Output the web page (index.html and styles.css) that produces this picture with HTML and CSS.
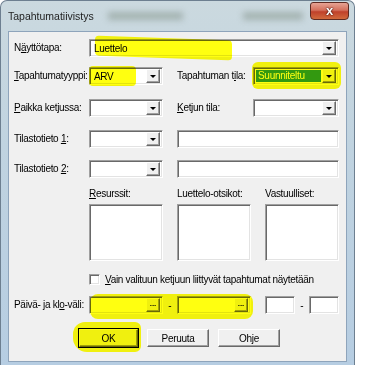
FILE: index.html
```html
<!DOCTYPE html>
<html lang="fi">
<head>
    <meta charset="UTF-8">
    <title>Tapahtumatiivistys</title>
    <link rel="stylesheet" href="styles.css">
</head>
<body>
    <div class="window">
        <div class="titlebar">
            <span class="title">Tapahtumatiivistys</span>
            <span class="glass g1"></span>
            <span class="glass g2"></span>
            <div class="close">x</div>
        </div>

        <div class="client">
            <div class="row r1">
                <label class="lbl">N<u>ä</u>yttötapa:</label>
                <div class="field combo span3">
                    <span class="value">Luettelo</span>
                    <span class="drop"></span>
                </div>
            </div>

            <div class="row r2">
                <label class="lbl clip"><u>T</u>apahtumatyyppi:</label>
                <div class="field combo">
                    <span class="value">ARV</span>
                    <span class="drop"></span>
                </div>
                <div class="pair span2">
                    <label class="lbl">Tapahtuman t<u>i</u>la:</label>
                    <div class="field combo narrow selected">
                        <span class="value">Suunniteltu</span>
                        <span class="drop"></span>
                    </div>
                </div>
            </div>

            <div class="row r3">
                <label class="lbl"><u>P</u>aikka ketjussa:</label>
                <div class="field combo">
                    <span class="value"></span>
                    <span class="drop"></span>
                </div>
                <div class="pair span2">
                    <label class="lbl"><u>K</u>etjun tila:</label>
                    <div class="field combo narrow">
                        <span class="value"></span>
                        <span class="drop"></span>
                    </div>
                </div>
            </div>

            <div class="row r4">
                <label class="lbl">Tilastotieto <u>1</u>:</label>
                <div class="field combo">
                    <span class="value"></span>
                    <span class="drop"></span>
                </div>
                <div class="field span2"></div>
            </div>

            <div class="row r5">
                <label class="lbl">Tilastotieto <u>2</u>:</label>
                <div class="field combo">
                    <span class="value"></span>
                    <span class="drop"></span>
                </div>
                <div class="field span2"></div>
            </div>

            <div class="row lists">
                <div class="list-col">
                    <label class="lbl"><u>R</u>esurssit:</label>
                    <div class="field listbox"></div>
                </div>
                <div class="list-col">
                    <label class="lbl">Luettelo-otsikot:</label>
                    <div class="field listbox"></div>
                </div>
                <div class="list-col">
                    <label class="lbl">Vastuulliset:</label>
                    <div class="field listbox"></div>
                </div>
            </div>

            <div class="row check-row">
                <label class="check span3">
                    <span class="box"></span>
                    <span><u>V</u>ain valituun ketjuun liittyvät tapahtumat näytetään</span>
                </label>
            </div>

            <div class="row dates">
                <label class="lbl">Päivä- ja kl<u>o</u>-väli:</label>
                <div class="pair span-dates">
                    <div class="field date">
                        <span class="value"></span>
                        <span class="dots">...</span>
                    </div>
                    <span class="dash">-</span>
                    <div class="field date">
                        <span class="value"></span>
                        <span class="dots">...</span>
                    </div>
                </div>
                <div class="pair">
                    <div class="field time"></div>
                    <span class="dash">-</span>
                    <div class="field time"></div>
                </div>
            </div>

            <div class="buttons">
                <div class="btn default">OK</div>
                <div class="btn">Peruuta</div>
                <div class="btn">Ohje</div>
            </div>

            <!-- highlighter marks -->
            <span class="mark m-luettelo"></span>
            <span class="mark m-arv"></span>
            <span class="mark m-tila"></span>
            <span class="mark m-date"></span>
            <span class="mark m-ok"></span>
        </div>
    </div>
</body>
</html>
```

FILE: styles.css
```css
body {
    margin: 0;
    background: #fff;
    font-family: "Liberation Sans", Arial, sans-serif;
    font-size: 10px;
    color: #000;
}
.window {
    width: 355px;
    height: 365px;
    box-sizing: border-box;
    padding: 0 7px 3px 7px;
    background: linear-gradient(to bottom, #cbd9df 0%, #c0d3e0 40%, #b6cde2 100%);
    border: 1px solid #6d7f90;
    border-bottom: none;
    border-radius: 7px 7px 0 0;
    display: flex;
    flex-direction: column;
    overflow: hidden;
}
.titlebar {
    height: 30px;
    flex-shrink: 0;
    position: relative;
    display: flex;
    align-items: center;
}
.title {
    font-size: 10.5px;
    color: #1e1e1e;
    position: relative;
    z-index: 1;
}
.glass {
    position: absolute;
    top: 11px;
    height: 8px;
    background: #7f8f84;
    filter: blur(3px);
    opacity: 0.5;
}
.g1 { left: 100px; width: 75px; }
.g2 { left: 235px; width: 60px; }
.close {
    position: absolute;
    right: -2px;
    top: 1px;
    width: 39px;
    height: 18px;
    box-sizing: border-box;
    border: 1px solid #5e2a22;
    border-radius: 3px 3px 4px 4px;
    background: linear-gradient(to bottom, #e6a394 0%, #d4705c 45%, #c0412b 55%, #d26a3c 100%);
    color: #fff;
    font-weight: bold;
    font-size: 13px;
    line-height: 15px;
    text-align: center;
    text-shadow: 0 0 2px #3b0d05, 0 0 1px #3b0d05;
}
.client {
    flex: 1;
    position: relative;
    background: #f0f0f0;
    border: 1px solid #8ea4bb;
    padding: 7px 5px 0 5px;
}
.row {
    display: grid;
    grid-template-columns: 61px 74px 74px 74px;
    column-gap: 14px;
    height: 18px;
}
.r2 { margin-top: 10px; }
.r3 { margin-top: 14px; }
.r4 { margin-top: 13px; }
.r5 { margin-top: 12px; }
.lbl {
    display: block;
    line-height: 18px;
    white-space: nowrap;
    letter-spacing: -0.3px;
}
.clip {
    width: 74px;
    overflow: hidden;
}
.span3 { grid-column: 2 / 5; }
.span2 { grid-column: 3 / 5; }
.span-dates { grid-column: 2 / 4; }
.pair {
    display: flex;
    align-items: center;
    justify-content: space-between;
}
.field {
    background: #fff;
    box-sizing: border-box;
    border: 1px solid;
    border-color: #a0a0a0 #fff #fff #a0a0a0;
    box-shadow: inset 1px 1px #696969, inset -1px -1px #e3e3e3;
    height: 18px;
}
.combo, .date {
    display: flex;
    align-items: center;
    padding: 2px;
}
.value {
    flex: 1;
    padding-left: 2px;
    letter-spacing: -0.3px;
}
.narrow { width: 86px; }
.drop, .dots {
    width: 14px;
    height: 14px;
    box-sizing: border-box;
    background: #f0f0f0;
    border: 1px solid;
    border-color: #fff #696969 #696969 #fff;
    box-shadow: inset -1px -1px #a0a0a0;
    display: flex;
    align-items: center;
    justify-content: center;
}
.drop::after {
    content: "";
    border-left: 3px solid transparent;
    border-right: 3px solid transparent;
    border-top: 3px solid #000;
}
.dots {
    font-weight: bold;
    font-size: 8px;
    line-height: 8px;
    padding-bottom: 3px;
}
.selected .value {
    background: #3399ff;
    color: #fff;
    margin-right: 1px;
    height: 12px;
    line-height: 12px;
}
.lists {
    height: auto;
    margin-top: 10px;
}
.list-col {
    width: 74px;
    display: flex;
    flex-direction: column;
    gap: 4px;
}
.list-col:first-child { grid-column: 2; }
.list-col .lbl { line-height: 12px; }
.listbox { height: 57px; }
.check-row {
    height: 14px;
    margin-top: 11px;
}
.check {
    display: flex;
    align-items: center;
    gap: 5px;
    letter-spacing: -0.3px;
}
.box {
    width: 11px;
    height: 11px;
    box-sizing: border-box;
    background: #fff;
    border: 1px solid;
    border-color: #a0a0a0 #fff #fff #a0a0a0;
    box-shadow: inset 1px 1px #696969, inset -1px -1px #e3e3e3;
}
.dates { margin-top: 10px; }
.date { width: 74px; }
.time { width: 30px; }
.buttons {
    display: flex;
    gap: 9px;
    margin-top: 15px;
    padding-left: 65px;
}
.btn {
    width: 62px;
    height: 18px;
    box-sizing: border-box;
    background: #f0f0f0;
    border: 1px solid;
    border-color: #fff #696969 #696969 #fff;
    box-shadow: inset -1px -1px #a0a0a0;
    display: flex;
    align-items: center;
    justify-content: center;
    letter-spacing: -0.3px;
}
.btn.default {
    width: 59px;
    outline: 1px solid #000;
}
.mark {
    position: absolute;
    background: #ffff10;
    mix-blend-mode: multiply;
    border-radius: 4px;
}
.m-luettelo { left: 86px; top: 6px; width: 137px; height: 20px; transform: skewY(2deg); }
.m-arv { left: 80px; top: 34px; width: 47px; height: 20px; }
.m-tila { left: 243px; top: 30px; width: 89px; height: 27px; border-radius: 6px; }
.m-date { left: 81px; top: 262px; width: 163px; height: 25px; border-radius: 8px; }
.m-ok { left: 64px; top: 290px; width: 68px; height: 30px; border-radius: 12px 6px 6px 14px; }
```
